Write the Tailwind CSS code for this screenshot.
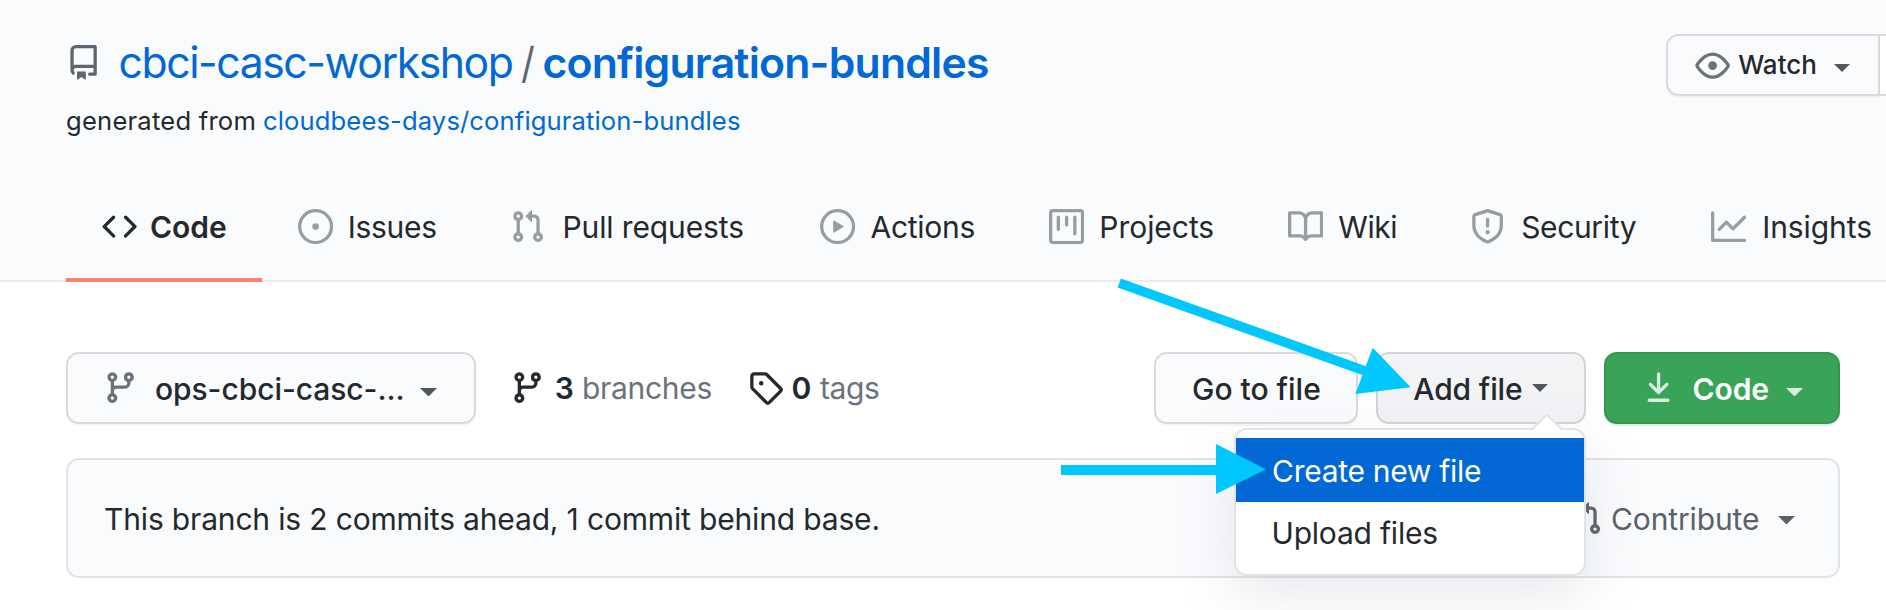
<!DOCTYPE html>
<html lang="en">
<head>
<meta charset="utf-8">
<title>cbci-casc-workshop/configuration-bundles</title>
<script src="https://cdn.jsdelivr.net/npm/@tailwindcss/browser@4"></script>
</head>
<body class="relative h-[610px] w-[1886px] overflow-hidden bg-white font-['Inter',sans-serif] text-[30px] leading-[36px] whitespace-nowrap text-[#24292e]">

<svg class="hidden">
  <symbol id="repo" viewBox="0 0 16 16"><path fill-rule="evenodd" d="M2 2.5A2.5 2.5 0 014.5 0h8.75a.75.75 0 01.75.75v12.5a.75.75 0 01-.75.75h-2.5a.75.75 0 110-1.5h1.75v-2h-8a1 1 0 00-.714 1.7.75.75 0 01-1.072 1.05A2.495 2.495 0 012 11.5v-9zm10.5-1V9h-8c-.356 0-.694.074-1 .208V2.5a1 1 0 011-1h8zM5 12.25v3.25a.25.25 0 00.4.2l1.45-1.087a.25.25 0 01.3 0L8.6 15.7a.25.25 0 00.4-.2v-3.25a.25.25 0 00-.25-.25h-3.5a.25.25 0 00-.25.25z"/></symbol>
  <symbol id="eye" viewBox="0 0 16 16"><path fill-rule="evenodd" d="M1.679 7.932c.412-.621 1.242-1.75 2.366-2.717C5.175 4.242 6.527 3.5 8 3.5c1.473 0 2.824.742 3.955 1.715 1.124.967 1.954 2.096 2.366 2.717a.119.119 0 010 .136c-.412.621-1.242 1.75-2.366 2.717C10.825 11.758 9.473 12.5 8 12.5c-1.473 0-2.824-.742-3.955-1.715C2.92 9.818 2.09 8.69 1.679 8.068a.119.119 0 010-.136zM8 2c-1.981 0-3.67.992-4.933 2.078C1.797 5.169.88 6.423.43 7.1a1.619 1.619 0 000 1.798c.45.678 1.367 1.932 2.637 3.024C4.329 13.008 6.019 14 8 14c1.981 0 3.67-.992 4.933-2.078 1.27-1.091 2.187-2.345 2.637-3.023a1.619 1.619 0 000-1.798c-.45-.678-1.367-1.932-2.637-3.023C11.671 2.992 9.981 2 8 2zm0 8a2 2 0 100-4 2 2 0 000 4z"/></symbol>
  <symbol id="code" viewBox="0 0 16 16"><path fill-rule="evenodd" d="M4.72 3.22a.75.75 0 011.06 1.06L2.06 8l3.72 3.72a.75.75 0 11-1.06 1.06L.47 8.53a.75.75 0 010-1.06l4.25-4.25zm6.56 0a.75.75 0 10-1.06 1.06L13.94 8l-3.72 3.72a.75.75 0 101.06 1.06l4.25-4.25a.75.75 0 000-1.06l-4.25-4.25z"/></symbol>
  <symbol id="issue" viewBox="0 0 16 16"><path fill-rule="evenodd" d="M8 1.5a6.5 6.5 0 100 13 6.5 6.5 0 000-13zM0 8a8 8 0 1116 0A8 8 0 010 8z"/><circle cx="8" cy="8" r="1.5"/></symbol>
  <symbol id="pr" viewBox="0 0 16 16"><path fill-rule="evenodd" d="M7.177 3.073L9.573.677A.25.25 0 0110 .854v4.792a.25.25 0 01-.427.177L7.177 3.427a.25.25 0 010-.354zM3.75 2.5a.75.75 0 100 1.5.75.75 0 000-1.5zm-2.25.75a2.25 2.25 0 113 2.122v5.256a2.251 2.251 0 11-1.5 0V5.372A2.25 2.25 0 011.5 3.25zM11 2.5h-1V4h1a1 1 0 011 1v5.628a2.251 2.251 0 101.5 0V5A2.5 2.5 0 0011 2.5zm1 10.25a.75.75 0 111.5 0 .75.75 0 01-1.5 0zM3.75 12a.75.75 0 100 1.5.75.75 0 000-1.5z"/></symbol>
  <symbol id="play" viewBox="0 0 16 16"><path fill-rule="evenodd" d="M1.5 8a6.5 6.5 0 1113 0 6.5 6.5 0 01-13 0zM8 0a8 8 0 100 16A8 8 0 008 0zM6.379 5.227A.25.25 0 006 5.442v5.117a.25.25 0 00.379.214l4.264-2.559a.25.25 0 000-.428L6.379 5.227z"/></symbol>
  <symbol id="project" viewBox="0 0 16 16"><path fill-rule="evenodd" d="M1.75 0A1.75 1.75 0 000 1.75v12.5C0 15.216.784 16 1.75 16h12.5A1.75 1.75 0 0016 14.25V1.75A1.75 1.75 0 0014.25 0H1.75zM1.5 1.75a.25.25 0 01.25-.25h12.5a.25.25 0 01.25.25v12.5a.25.25 0 01-.25.25H1.75a.25.25 0 01-.25-.25V1.75zM11.75 3a.75.75 0 00-.75.75v7.5a.75.75 0 001.5 0v-7.5a.75.75 0 00-.75-.75zm-8.25.75a.75.75 0 011.5 0v5.5a.75.75 0 01-1.5 0v-5.5zM8 3a.75.75 0 00-.75.75v3.5a.75.75 0 001.5 0v-3.5A.75.75 0 008 3z"/></symbol>
  <symbol id="book" viewBox="0 0 16 16"><path fill-rule="evenodd" d="M0 1.75A.75.75 0 01.75 1h4.253c1.227 0 2.317.59 3 1.501A3.744 3.744 0 0111.006 1h4.245a.75.75 0 01.75.75v10.5a.75.75 0 01-.75.75h-4.507a2.25 2.25 0 00-1.591.659l-.622.621a.75.75 0 01-1.06 0l-.622-.621A2.25 2.25 0 005.258 13H.75a.75.75 0 01-.75-.75V1.75zm8.755 3a2.25 2.25 0 012.25-2.25H14.5v9h-3.757c-.71 0-1.4.201-1.992.572l.004-7.322zm-1.504 7.324l.004-5.073-.002-2.253A2.25 2.25 0 005.003 2.5H1.5v9h3.757a3.75 3.75 0 011.994.574z"/></symbol>
  <symbol id="shield" viewBox="0 0 16 16"><path fill-rule="evenodd" d="M7.467.133a1.75 1.75 0 011.066 0l5.25 1.68A1.75 1.75 0 0115 3.48V7c0 1.566-.32 3.182-1.303 4.682-.983 1.498-2.585 2.813-5.032 3.855a1.7 1.7 0 01-1.33 0c-2.447-1.042-4.049-2.357-5.032-3.855C1.32 10.182 1 8.566 1 7V3.48a1.75 1.75 0 011.217-1.667l5.25-1.68zm.61 1.429a.25.25 0 00-.153 0l-5.25 1.68a.25.25 0 00-.174.238V7c0 1.358.275 2.666 1.057 3.86.784 1.194 2.121 2.34 4.366 3.297a.2.2 0 00.154 0c2.245-.956 3.582-2.104 4.366-3.298C13.225 9.666 13.5 8.36 13.5 7V3.48a.25.25 0 00-.174-.237l-5.25-1.68zM9 10.5a1 1 0 11-2 0 1 1 0 012 0zm-.25-5.75a.75.75 0 10-1.5 0v3a.75.75 0 001.5 0v-3z"/></symbol>
  <symbol id="graph" viewBox="0 0 16 16"><path fill-rule="evenodd" d="M1.5 1.75a.75.75 0 00-1.5 0v12.5c0 .414.336.75.75.75h14.5a.75.75 0 000-1.5H1.5V1.75zm14.28 2.53a.75.75 0 00-1.06-1.06L10 7.94 7.53 5.47a.75.75 0 00-1.06 0L3.22 8.72a.75.75 0 001.06 1.06L7 7.06l2.47 2.47a.75.75 0 001.06 0l5.25-5.25z"/></symbol>
  <symbol id="branch" viewBox="0 0 16 16"><path fill-rule="evenodd" d="M11.75 2.5a.75.75 0 100 1.5.75.75 0 000-1.5zm-2.25.75a2.25 2.25 0 113 2.122V6A2.5 2.5 0 0110 8.5H6a1 1 0 00-1 1v1.128a2.251 2.251 0 11-1.5 0V5.372a2.25 2.25 0 111.5 0v1.836A2.492 2.492 0 016 7h4a1 1 0 001-1v-.628A2.25 2.25 0 019.5 3.25zM4.25 12a.75.75 0 100 1.5.75.75 0 000-1.5zM3.5 3.25a.75.75 0 111.5 0 .75.75 0 01-1.5 0z"/></symbol>
  <symbol id="tag" viewBox="0 0 16 16"><path fill-rule="evenodd" d="M2.5 7.775V2.75a.25.25 0 01.25-.25h5.025a.25.25 0 01.177.073l6.25 6.25a.25.25 0 010 .354l-5.025 5.025a.25.25 0 01-.354 0l-6.25-6.25a.25.25 0 01-.073-.177zm-1.5 0V2.75C1 1.784 1.784 1 2.75 1h5.025c.464 0 .91.184 1.238.513l6.25 6.25a1.75 1.75 0 010 2.474l-5.026 5.026a1.75 1.75 0 01-2.474 0l-6.25-6.25A1.75 1.75 0 011 7.775zM6 5a1 1 0 100 2 1 1 0 000-2z"/></symbol>
  <symbol id="download" viewBox="0 0 16 16"><path fill-rule="evenodd" d="M7.47 10.78a.75.75 0 001.06 0l3.75-3.75a.75.75 0 00-1.06-1.06L8.75 8.44V1.75a.75.75 0 00-1.5 0v6.69L4.78 5.97a.75.75 0 00-1.06 1.06l3.75 3.75zM3.75 13a.75.75 0 000 1.5h8.5a.75.75 0 000-1.5h-8.5z"/></symbol>
  <symbol id="caret" viewBox="0 0 17 8.5"><path d="M0 0H17L8.5 8.5Z"/></symbol>
</svg>

<header class="flex h-[282px] flex-col border-b-2 border-[#eaecee] bg-[#fafbfd]">
  <div class="flex h-[172px] shrink-0 items-start justify-between">
    <div class="pl-[66px]">
      <h1 class="mt-10 flex h-[46px] items-center text-[42.7px] leading-[46px]">
        <svg class="-mt-px ml-[0.3px] size-[35.2px] shrink-0 fill-[#5d656e]"><use href="#repo"/></svg>
        <a class="ml-[17.1px] w-[402.4px] tracking-[-1.43px] text-[#0168d6]">cbci-casc-workshop</a>
        <span class="w-[21.5px] text-[#5d656e]"><span class="inline-block origin-left scale-x-90">/</span></span>
        <a class="font-semibold tracking-[-0.777px] text-[#0168d6]">configuration-bundles</a>
      </h1>
      <p class="mt-[19px] flex text-[25.6px] leading-[32px]">
        <span class="w-[197px] tracking-[0.215px]">generated from</span>
        <a class="tracking-[0.12px] text-[#0168d6]">cloudbees-days/configuration-bundles</a>
      </p>
    </div>
    <div class="mt-[34px] flex h-[62px] w-[220px]">
      <button class="flex w-[214px] shrink-0 items-center rounded-l-[13px] border-2 border-[#d8dadd] bg-[#fafbfd] pl-[27.4px] text-[26px] font-medium leading-[32px] shadow-[0_2px_0_rgba(27,31,35,0.04)]">
        <svg class="mt-0.5 size-[35.2px] shrink-0 fill-[#6a737d]"><use href="#eye"/></svg>
        <span class="-mt-px ml-[7.6px] w-[96px] text-left">Watch</span>
        <svg class="mt-[5px] h-2 w-4 fill-[#53575c]"><use href="#caret"/></svg>
      </button>
      <div class="w-2 border-y-2 border-[#d8dadd] bg-white"></div>
    </div>
  </div>
  <nav class="ml-[66px] flex h-[110px] shrink-0">
    <a class="flex h-full w-[196px] border-b-4 border-[#fd8170] pl-[35.8px] font-semibold"><span class="flex h-[110px] items-center"><svg class="size-[35.2px] fill-[#24292e]"><use href="#code"/></svg><span class="ml-[13px]">Code</span></span></a>
    <a class="ml-[35.6px] flex w-[212.2px] items-center"><svg class="size-[35.2px] fill-[#959da5]"><use href="#issue"/></svg><span class="ml-[14.9px] tracking-[-0.29px]">Issues</span></a>
    <a class="flex w-[309.8px] items-center"><svg class="size-[35.2px] fill-[#959da5]"><use href="#pr"/></svg><span class="ml-[17.5px] tracking-[-0.12px]">Pull requests</span></a>
    <a class="flex w-[229px] items-center"><svg class="size-[35.2px] fill-[#959da5]"><use href="#play"/></svg><span class="ml-[15.8px] tracking-[-0.3px]">Actions</span></a>
    <a class="flex w-[239px] items-center"><svg class="size-[35.2px] fill-[#959da5]"><use href="#project"/></svg><span class="ml-[15.6px] tracking-[-0.05px]">Projects</span></a>
    <a class="flex w-[182px] items-center"><svg class="size-[35.2px] fill-[#959da5]"><use href="#book"/></svg><span class="ml-[15.6px] tracking-[-0.5px]">Wiki</span></a>
    <a class="flex w-[241px] items-center"><svg class="size-[35.2px] fill-[#959da5]"><use href="#shield"/></svg><span class="ml-[16.4px] tracking-[-0.35px]">Security</span></a>
    <a class="flex items-center"><svg class="size-[35.2px] fill-[#959da5]"><use href="#graph"/></svg><span class="ml-[16.4px] tracking-[-0.08px]">Insights</span></a>
  </nav>
</header>

<main class="pl-[66px] pr-[46px] pt-[70px]">
  <div class="flex h-[72px] items-center">
    <button class="flex h-full w-[410px] items-center rounded-[13px] border-2 border-[#d8dadd] bg-[#fafbfd] pl-[35.4px] font-medium shadow-[0_2px_0_rgba(27,31,35,0.04)]">
      <svg class="size-[35.2px] shrink-0 fill-[#6a737d]"><use href="#branch"/></svg>
      <span class="ml-[16.4px] mt-0.5 w-[265.3px] text-left tracking-[-0.06px]">ops-cbci-casc-...</span>
      <svg class="mt-2 h-[8.5px] w-[17px] fill-[#53575c]"><use href="#caret"/></svg>
    </button>
    <svg class="ml-[34.4px] size-[35.2px] shrink-0"><use href="#branch" fill="#24292e"/></svg>
    <span class="ml-[9.2px] w-[27.2px] font-semibold">3</span>
    <span class="w-[165.8px] tracking-[-0.3px] text-[#6a737d]">branches</span>
    <svg class="size-[35.2px] shrink-0"><use href="#tag" fill="#24292e"/></svg>
    <span class="ml-[8.5px] w-[28.7px] font-semibold">0</span>
    <span class="w-[334px] tracking-[-0.4px] text-[#6a737d]">tags</span>
    <button class="flex h-full w-[204px] shrink-0 items-center rounded-[13px] border-2 border-[#d8dadd] bg-[#fafbfd] pl-9 pt-0.5 font-medium shadow-[0_2px_0_rgba(27,31,35,0.04)]">Go to file</button>
    <div class="relative ml-[18px] h-full w-[210px] shrink-0">
      <button class="flex size-full items-center rounded-[13px] border-2 border-[#d1d3d6] bg-[#f2f3f5] pl-[35.3px] font-medium">
        <span class="mt-0.5 w-[119px] text-left tracking-[-0.15px]">Add file</span>
        <svg class="h-2 w-4 fill-[#53575c]"><use href="#caret"/></svg>
      </button>
      <!-- dropdown menu, right-aligned under its button -->
      <div class="absolute right-0 top-[76px] z-10 h-[148px] w-[352px] rounded-[13px] border-2 border-[#e0e3e8] bg-white pt-2 shadow-[0_18px_53px_rgba(149,157,165,0.22)]">
        <svg class="absolute -top-[16px] right-[20px] h-[17px] w-[34px]" viewBox="0 0 34 17"><path d="M2 17 17 2 32 17Z" fill="#fff"/><path d="M1 16 17 1 33 16" fill="none" stroke="#e0e3e8" stroke-width="1.8"/></svg>
        <a class="flex h-16 items-center bg-[#0168d6] pl-9 pt-0.5 tracking-[-0.29px] text-white">Create new file</a>
        <a class="flex h-[62px] items-center pl-[35.5px] tracking-[-0.21px]">Upload files</a>
      </div>
    </div>
    <button class="ml-[18px] flex h-full w-[236px] shrink-0 items-center rounded-[13px] border-2 border-[#35954f] bg-[#39a457] pl-[35.4px] font-semibold text-white shadow-[0_2px_0_rgba(27,31,35,0.1)]">
      <svg class="size-[35.2px] shrink-0 fill-white/80"><use href="#download"/></svg>
      <span class="ml-[16px] mt-0.5 w-[93.8px] text-left tracking-[-0.16px]">Code</span>
      <svg class="mt-2 h-[8.5px] w-[17px] fill-white/80"><use href="#caret"/></svg>
    </button>
  </div>

  <div class="mt-[34px] flex h-[120px] items-center rounded-[13px] border-2 border-[#e0e3e8] bg-[#fafbfd] pl-9">
    <span class="mt-0.5 w-[1463px] tracking-[-0.164px]">This branch is 2 commits ahead, 1 commit behind base.</span>
    <svg class="mt-0.5 size-[35.2px] shrink-0 fill-[#586069]"><use href="#pr"/></svg>
    <span class="ml-[8.8px] mt-0.5 w-[166.8px] tracking-[-0.12px] text-[#586069]">Contribute</span>
    <svg class="mt-1 h-[8.5px] w-[17px] fill-[#586069]"><use href="#caret"/></svg>
  </div>
</main>

<!-- annotation arrows laid over the page -->
<svg class="pointer-events-none absolute left-0 top-0 z-20 h-[610px] w-[1886px]" viewBox="0 0 1886 610" fill="#00c8ff">
  <path d="M1119.2 283 1368 372" stroke="#00c8ff" stroke-width="9.6" fill="none"/>
  <path d="M1372.7 347.7 1410.7 387.3 1355.3 394Z"/>
  <path d="M1061 465H1216V444L1266 469.3 1216 494V475H1061Z"/>
</svg>
</body>
</html>
